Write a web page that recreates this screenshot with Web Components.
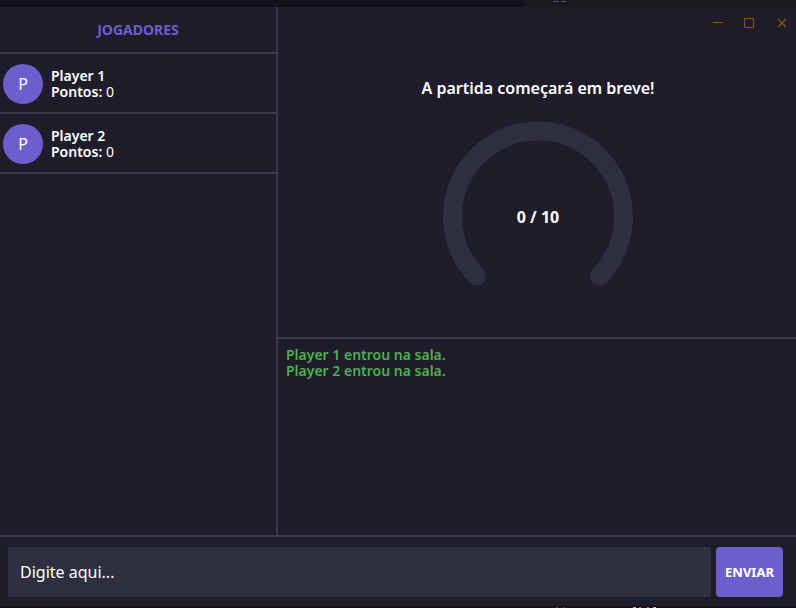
<!DOCTYPE html>
<html lang="pt-BR">
<head>
<meta charset="utf-8">
<title>Sala de jogo</title>
<style>
html, body { height: 100%; margin: 0; }
body { background: #201d2b; color: #fff; font: 16px/16px "Noto Sans", "Open Sans", sans-serif; overflow: hidden; }
</style>
</head>
<body>
<game-room></game-room>
<script>
const define = (name, html) => {
  const template = document.createElement('template');
  template.innerHTML = html;
  customElements.define(name, class extends HTMLElement {
    constructor() {
      super();
      this.attachShadow({ mode: 'open' }).append(template.content.cloneNode(true));
    }
  });
};

define('desktop-edge', `
<style>
:host { display: block; height: 7px; overflow: hidden; background: linear-gradient(90deg, #14111b 524px, #1b1820 524px); }
svg { display: block; width: 100%; height: 100%; }
</style>
<svg aria-hidden="true"><path d="M553 1.5h6M561 1.500h5" fill="none" stroke="#5b4b7c"/></svg>`);

define('window-controls', `
<style>
:host { display: flex; }
button { display: block; width: 12px; height: 12px; padding: 0; border: 0; background: none; color: #8a5709; }
button + button { margin-left: 19px; }
button:last-child { margin-left: 21px; }
svg { display: block; width: 12px; height: 12px; fill: none; stroke: currentColor; }
</style>
<button aria-label="Minimizar"><svg viewBox="0 0 12 12"><path d="M1 5.5h10"/></svg></button>
<button aria-label="Maximizar"><svg viewBox="0 0 12 12"><path d="M1.5 1.5h9v9h-9z"/></svg></button>
<button aria-label="Fechar"><svg viewBox="0 0 12 12"><path d="M2 2l8 8M10 2l-8 8" stroke-width="1.2"/></svg></button>`);

define('player-row', `
<style>
:host { display: flex; align-items: center; gap: 8px; padding: 10px 3px 8px; border-bottom: 2px solid #3a3b4a; font-size: 14px; }
.avatar { width: 40px; height: 40px; border-radius: 50%; background: #6c5fcd; font-size: 16px; line-height: 40px; text-align: center; }
b { font-weight: 600; }
p { margin: 0; }
</style>
<div class="avatar">P</div>
<div><p><b><slot name="name"></slot></b></p><p><b>Pontos:</b> <slot name="score"></slot></p></div>`);

define('player-list', `
<style>
:host { display: block; border-right: 2px solid #3a3b4a; }
h2 { margin: 0; padding: 15px 0 14px; border-bottom: 2px solid #3a3b4a; color: #6c5fcd; font-size: 14px; line-height: 16px; text-align: center; }
</style>
<h2>JOGADORES</h2>
<slot></slot>`);

define('score-gauge', `
<style>
:host { display: grid; place-items: center; font-weight: bold; }
svg, span { grid-area: 1 / 1; }
svg { display: block; width: 190px; height: 190px; }
</style>
<svg viewBox="0 0 190 190" aria-hidden="true"><path d="M33.5 154A85.5 85.5 0 1 1 156.500 154" fill="none" stroke="#2f303f" stroke-width="19" stroke-linecap="round"/></svg>
<span><slot></slot></span>`);

define('match-panel', `
<style>
:host { display: block; border-bottom: 2px solid #3a3b4a; }
header { display: flex; justify-content: flex-end; padding: 10px 8px; }
main { display: flex; flex-direction: column; align-items: center; gap: 26px; padding: 41px 0 25px 2px; }
h1 { margin: 0; font-size: 16px; font-weight: 600; line-height: 16px; }
</style>
<header><window-controls></window-controls></header>
<main><h1><slot></slot></h1><score-gauge>0 / 10</score-gauge></main>`);

define('message-log', `
<style>
:host { display: block; padding: 8px; color: #4caf50; font-size: 14px; font-weight: 600; }
</style>
<slot></slot>`);

define('chat-form', `
<style>
:host { display: block; border-top: 2px solid #3a3b4a; padding: 10px 13px 9px 8px; }
form { display: flex; gap: 5px; margin: 0; }
input { flex: 1; min-width: 0; height: 50px; box-sizing: border-box; padding: 0 12px; border: 0; border-radius: 3px; background: #2f303f; color: #fff; font: inherit; }
input::placeholder { color: #fff; opacity: 1; }
button { width: 67px; height: 50px; padding: 0; border: 0; border-radius: 4px; background: #6c5fcd; color: #fff; font: bold 13px/16px "Noto Sans", sans-serif; }
</style>
<form><input type="text" placeholder="Digite aqui..." aria-label="Mensagem"><button type="button">ENVIAR</button></form>`);

define('game-room', `
<style>
:host { display: flex; flex-direction: column; height: 100vh; }
.room { flex: 1; min-height: 0; display: grid; grid-template-columns: 278px 1fr; }
.side { display: grid; grid-template-rows: auto 1fr; min-width: 0; }
.bottom { height: 2px; background: #14111b; }
.bottom svg { display: block; width: 100%; height: 2px; }
p { margin: 0; }
</style>
<desktop-edge></desktop-edge>
<div class="room">
  <player-list>
    <player-row><span slot="name">Player 1</span><span slot="score">0</span></player-row>
    <player-row><span slot="name">Player 2</span><span slot="score">0</span></player-row>
  </player-list>
  <div class="side">
    <match-panel>A partida começará em breve!</match-panel>
    <message-log><p>Player 1 entrou na sala.</p><p>Player 2 entrou na sala.</p></message-log>
  </div>
</div>
<chat-form></chat-form>
<div class="bottom"><svg aria-hidden="true" fill="none"><path d="M556 1.5h2M563 1.500h2" stroke="#4a4168"/><path d="M633 1.5h3M653 1.500h3" stroke="#b9b4ae"/><path d="M639 1.5h2M647 1.500h2" stroke="#c5647a"/></svg></div>`);
</script>
</body>
</html>
